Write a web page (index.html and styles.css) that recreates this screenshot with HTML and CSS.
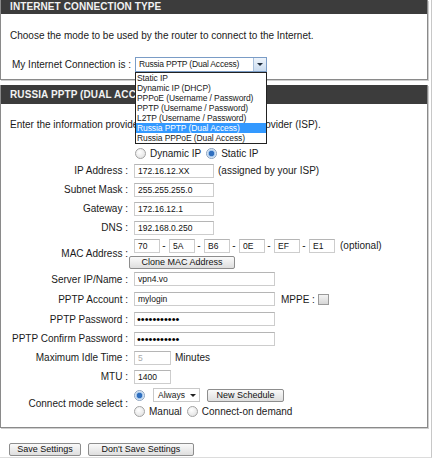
FILE: index.html
```html
<!DOCTYPE html>
<html>
<head>
  <title>Internet Connection Setup</title>
  <link rel="stylesheet" href="styles.css">
</head>
<body>
  <div class="wrap">
    <div class="box box-type">
      <div class="hd">INTERNET CONNECTION TYPE</div>
      <p class="intro">Choose the mode to be used by the router to connect to the Internet.</p>
      <div class="conn-row">
        <span class="conn-lbl">My Internet Connection is :</span>
        <div class="combo">
          <div class="select select-main">Russia PPTP (Dual Access)<span class="arrow"></span></div>
          <ul class="list">
            <li>Static IP</li>
            <li>Dynamic IP (DHCP)</li>
            <li>PPPoE (Username / Password)</li>
            <li>PPTP (Username / Password)</li>
            <li>L2TP (Username / Password)</li>
            <li class="sel">Russia PPTP (Dual Access)</li>
            <li>Russia PPPoE (Dual Access)</li>
          </ul>
        </div>
      </div>
    </div>

    <div class="box box-pptp">
      <div class="hd hd-tall">RUSSIA PPTP (DUAL ACCESS)</div>
      <p class="intro intro2">Enter the information provided by your Internet Service Provider (ISP).</p>

      <div class="radio-row">
        <span class="radio"></span><span class="rtxt">Dynamic IP</span>
        <span class="radio on"></span><span class="rtxt">Static IP</span>
      </div>

      <div class="row r19"><span class="lbl">IP Address :</span><input class="in in-md" value="172.16.12.XX"><span class="after">(assigned by your ISP)</span></div>
      <div class="row r19"><span class="lbl">Subnet Mask :</span><input class="in in-md" value="255.255.255.0"></div>
      <div class="row r19"><span class="lbl">Gateway :</span><input class="in in-md" value="172.16.12.1"></div>
      <div class="row r19"><span class="lbl">DNS :</span><input class="in in-md" value="192.168.0.250"></div>

      <div class="row mac-row">
        <span class="lbl">MAC Address :</span>
        <div class="stack">
          <div class="mac">
            <input class="in in-mac" value="70"><span class="dash">-</span>
            <input class="in in-mac" value="5A"><span class="dash">-</span>
            <input class="in in-mac" value="B6"><span class="dash">-</span>
            <input class="in in-mac" value="0E"><span class="dash">-</span>
            <input class="in in-mac" value="EF"><span class="dash">-</span>
            <input class="in in-mac" value="E1"><span class="opt">(optional)</span>
          </div>
          <button class="btn btn-clone">Clone MAC Address</button>
        </div>
      </div>

      <div class="row r20"><span class="lbl">Server IP/Name :</span><input class="in in-lg" value="vpn4.vo"></div>
      <div class="row r20"><span class="lbl">PPTP Account :</span><input class="in in-lg" value="mylogin"><span class="mppe">MPPE :</span><span class="check"></span></div>
      <div class="row r20"><span class="lbl">PPTP Password :</span><input class="in in-lg pw" type="password" value="12345678901"></div>
      <div class="row r19"><span class="lbl">PPTP Confirm Password :</span><input class="in in-lg pw" type="password" value="12345678901"></div>
      <div class="row r19"><span class="lbl">Maximum Idle Time :</span><input class="in in-sm dim" value="5"><span class="after">Minutes</span></div>
      <div class="row r19"><span class="lbl">MTU :</span><input class="in in-sm" value="1400"></div>

      <div class="row mode-row">
        <span class="lbl">Connect mode select :</span>
        <div class="stack">
          <div class="line">
            <span class="radio on"></span>
            <div class="select select-small">Always<span class="caret"></span></div>
            <button class="btn btn-sched">New Schedule</button>
          </div>
          <div class="line">
            <span class="radio"></span><span class="rtxt">Manual</span>
            <span class="radio"></span><span class="rtxt">Connect-on demand</span>
          </div>
        </div>
      </div>
    </div>

    <div class="actions">
      <button class="btn btn-save">Save Settings</button>
      <button class="btn btn-nosave">Don't Save Settings</button>
    </div>
  </div>
</body>
</html>
```

FILE: styles.css
```css
body {
  margin: 0;
  background: #fff;
  font-family: "Liberation Sans", Arial, sans-serif;
  font-size: 10px;
  color: #1a1a1a;
}
.wrap {
  width: 431px;
  height: 457px;
  border-right: 1px solid #c8c8c8;
  border-bottom: 1px solid #dcdcdc;
}
.box {
  width: 426px;
  border: 1px solid #8a8a8a;
  border-top: none;
  box-shadow: 1px 1px 0 #cfcfcf;
}
.box-type {
  height: 79px;
  position: relative;
  z-index: 2;
}
.box-pptp {
  margin-top: 5px;
  height: 342px;
}
.hd {
  background: #3c3c3c;
  color: #f2f2f2;
  font-weight: bold;
  font-size: 10px;
  letter-spacing: 0.1px;
  height: 14px;
  line-height: 13px;
  padding-left: 9px;
  white-space: nowrap;
}
.hd-tall {
  height: 19px;
  line-height: 20px;
}
.intro {
  margin: 15px 0 0 9px;
  line-height: 13px;
  white-space: nowrap;
}
.intro2 {
  margin-top: 14px;
  line-height: 14px;
}

/* connection type select */
.conn-row {
  display: flex;
  align-items: center;
  height: 15px;
  margin-top: 15px;
  padding-left: 11px;
}
.conn-lbl { width: 123px; white-space: nowrap; }
.combo { position: relative; }
.select {
  position: relative;
  box-sizing: border-box;
  border: 1px solid #7a9cc6;
  background: #fff;
  font-size: 8.5px;
  letter-spacing: -0.2px;
  padding-left: 3px;
  white-space: nowrap;
}
.select-main {
  width: 132px;
  height: 15px;
  line-height: 13px;
}
.arrow {
  position: absolute;
  right: 0;
  top: 0;
  width: 12px;
  height: 13px;
  border-left: 1px solid #a8c0dc;
  background: linear-gradient(#eef4fb, #c9dbef);
}
.arrow::after {
  content: "";
  position: absolute;
  left: 3px;
  top: 5px;
  border-left: 3px solid transparent;
  border-right: 3px solid transparent;
  border-top: 3px solid #1d2b3a;
}
.list {
  position: absolute;
  left: 0;
  top: 15px;
  width: 132px;
  box-sizing: border-box;
  margin: 0;
  padding: 0;
  list-style: none;
  background: #fff;
  border: 1px solid #222;
  font-size: 8.5px;
  letter-spacing: -0.1px;
}
.list li {
  height: 10px;
  line-height: 10px;
  padding-left: 1px;
  white-space: nowrap;
}
.list li.sel {
  background: #3399ff;
  color: #fff;
}

/* form rows */
.radio-row, .line {
  display: flex;
  align-items: center;
  white-space: nowrap;
}
.radio-row {
  height: 16px;
  margin-top: 13px;
  padding-left: 134px;
}
.radio {
  width: 9px;
  height: 9px;
  border-radius: 50%;
  border: 1px solid #a2a2a2;
  background: radial-gradient(circle at 40% 35%, #fff, #dcdcdc);
  flex: none;
}
.radio.on {
  background: radial-gradient(circle, #2f6fbf 0 2.5px, #9fc3ea 3px, #eef4fb 4.5px);
  border-color: #8aa2bf;
}
.rtxt { margin: 0 5px 0 4px; }
.row {
  display: flex;
  align-items: center;
  white-space: nowrap;
}
.r19 { height: 19px; }
.r20 { height: 20px; }
.lbl {
  width: 127px;
  text-align: right;
  margin-right: 6px;
  flex: none;
}
.in {
  box-sizing: border-box;
  height: 14px;
  border: 1px solid #cdcdcd;
  border-top-color: #b5b5b5;
  padding: 0 3px;
  font-family: "Liberation Sans", Arial, sans-serif;
  font-size: 8.5px;
  color: #111;
  background: #fff;
  margin: 0;
}
.in-md { width: 80px; }
.in-lg { width: 141px; }
.in-sm { width: 37px; }
.in-mac { width: 26px; }
.pw { font-size: 11px; color: #000; padding-left: 2px; }
.dim { color: #aaa; }
.after { margin-left: 4px; }
.mppe { margin-left: 6px; }
.check {
  width: 9px;
  height: 9px;
  margin-left: 3px;
  border: 1px solid #9a9a9a;
  background: linear-gradient(#f4f4f4, #d6d6d6);
}
.mac-row { height: 32px; }
.stack {
  display: flex;
  flex-direction: column;
}
.mac {
  display: flex;
  align-items: center;
  height: 16px;
}
.dash { width: 8px; text-align: center; margin-right: 1px; }
.opt { margin-left: 5px; }
.btn {
  box-sizing: border-box;
  height: 13px;
  padding: 0;
  border: 1px solid #8d8d8d;
  border-radius: 2px;
  background: linear-gradient(#fafafa, #dedede);
  font-family: "Liberation Sans", Arial, sans-serif;
  font-size: 9px;
  line-height: 11px;
  color: #111;
  white-space: nowrap;
}
.btn-clone { width: 106px; margin: 2px 0 0 -5px; }
.mode-row { height: 34px; }
.line { height: 16px; }
.select-small {
  width: 47px;
  height: 14px;
  line-height: 12px;
  margin-left: 8px;
  border-color: #c9c9c9;
  font-size: 8.5px;
  letter-spacing: 0;
  padding-left: 4px;
}
.caret {
  position: absolute;
  right: 3px;
  top: 5px;
  border-left: 3px solid transparent;
  border-right: 3px solid transparent;
  border-top: 3px solid #222;
}
.btn-sched { width: 77px; margin-left: 7px; }

.actions {
  display: flex;
  gap: 7px;
  margin-top: 15px;
  padding-left: 9px;
}
.btn-save { width: 72px; }
.btn-nosave { width: 106px; }
```
